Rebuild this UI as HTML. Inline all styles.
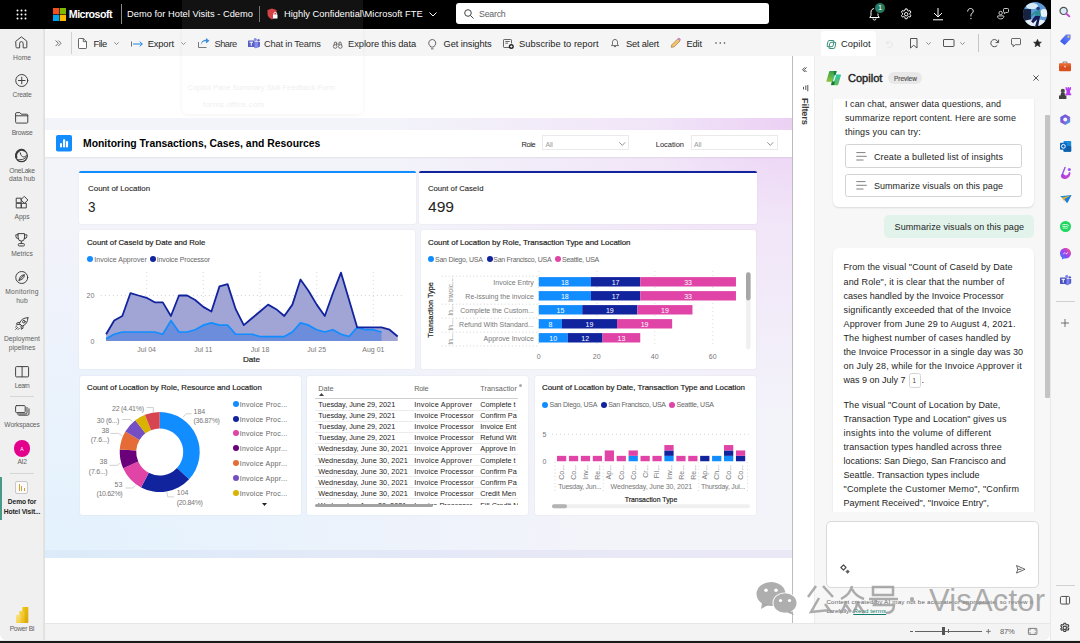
<!DOCTYPE html>
<html><head><meta charset="utf-8">
<style>
*{box-sizing:border-box;margin:0;padding:0}
html,body{width:1080px;height:643px;overflow:hidden;background:#fff;font-family:"Liberation Sans",sans-serif;color:#242424}
.a{position:absolute}
.t{white-space:nowrap;line-height:1}
.card{position:absolute;background:#fff;border-radius:2px;box-shadow:0 0 1.5px rgba(0,0,0,.10)}
svg{overflow:visible}

</style></head><body>
<div class="a" style="left:0;top:0;width:1050px;height:29px;background:#000"></div>
<div class="a" style="left:0;top:29px;width:44px;height:611px;background:#f0f0f0;border-bottom-left-radius:6px;box-shadow:1px 0 1px rgba(0,0,0,.06)"></div>
<div class="a" style="left:44px;top:29px;width:1006px;height:27px;background:#f5f5f5"></div>
<div class="a" style="left:44px;top:56px;width:748px;height:567px;background:#fff"></div>
<div class="a" style="left:44px;top:118px;width:748px;height:432px;background:radial-gradient(ellipse 400px 300px at 100% 0%,#ebd0f4 0%,rgba(240,220,247,.6) 35%,rgba(242,236,250,0) 100%),radial-gradient(ellipse 540px 320px at 0% 100%,#e3f2fd 0%,rgba(229,242,253,.7) 40%,rgba(243,243,250,0) 100%),#f3f3fa"></div>
<div class="a" style="left:44px;top:550px;width:748px;height:8px;background:linear-gradient(90deg,#dcebf9,#e6e8f6 60%,#ebe8f6)"></div>
<div class="a" style="left:792px;top:56px;width:23px;height:567px;background:#fff;border-left:1px solid #bdbdbd;border-right:1px solid #ececec"></div>
<div class="a" style="left:815px;top:56px;width:235px;height:567px;background:#f7f7f7"></div>
<div class="a" style="left:44px;top:623px;width:1006px;height:17px;background:#f3f3f3;border-top:1px solid #e6e6e6;border-radius:0 0 6px 0"></div>
<div class="a" style="left:0;top:640px;width:1080px;height:1px;background:#e8e8e8"></div>
<div class="a" style="left:0;top:641px;width:1080px;height:2px;background:#1a1a1a"></div>
<div class="a" style="left:1050px;top:0;width:30px;height:640px;background:#f7f7f7;border-left:1px solid #e8e8e8"></div>
<div class="a" style="left:43px;top:29px;width:2px;height:611px;background:linear-gradient(90deg,#e6e6e6,#dedede);z-index:5"></div>
<svg class="a" style="left:16px;top:9px" width="11" height="11" viewBox="0 0 11 11" fill="#fff"><circle cx="1.5" cy="1.5" r="1"/><circle cx="5.5" cy="1.5" r="1"/><circle cx="9.5" cy="1.5" r="1"/><circle cx="1.5" cy="5.5" r="1"/><circle cx="5.5" cy="5.5" r="1"/><circle cx="9.5" cy="5.5" r="1"/><circle cx="1.5" cy="9.5" r="1"/><circle cx="5.5" cy="9.5" r="1"/><circle cx="9.5" cy="9.5" r="1"/></svg>
<svg class="a" style="left:53px;top:7.5px" width="13" height="13" viewBox="0 0 13 13"><rect x="0" y="0" width="6.2" height="6.2" fill="#f25022"/><rect x="6.8" y="0" width="6.2" height="6.2" fill="#7fba00"/><rect x="0" y="6.8" width="6.2" height="6.2" fill="#00a4ef"/><rect x="6.8" y="6.8" width="6.2" height="6.2" fill="#ffb900"/></svg>
<div class="a t" style="left:68.8px;top:9.24px;font-size:10.7px;color:#fff;font-weight:700;letter-spacing:-0.549px;">Microsoft</div>
<div class="a" style="left:121px;top:4px;width:1px;height:20px;background:#8a8a8a"></div>
<div class="a t" style="left:127px;top:10.03px;font-size:9.3px;color:#fff;letter-spacing:0.022px;">Demo for Hotel Visits - Cdemo</div>
<div class="a" style="left:182px;top:0;width:181px;height:114px;background:rgba(255,255,255,.07);border-radius:0 0 6px 6px;box-shadow:0 1px 4px rgba(0,0,0,.05);z-index:50"></div>
<div class="a" style="left:259px;top:6px;width:1px;height:16px;background:#6a6a6a"></div>
<svg class="a" style="left:267px;top:8px" width="11" height="12" viewBox="0 0 11 12"><path d="M5 0.5 L9.5 2 V6 C9.5 8.5 7.5 10.5 5 11.5 C2.5 10.5 0.5 8.5 0.5 6 V2 Z" fill="#d13438"/><rect x="6" y="6.5" width="4.5" height="4" rx="0.5" fill="#fff"/><path d="M6.8 6.8 V5.8 a1.45 1.45 0 0 1 2.9 0 V6.8" stroke="#fff" stroke-width="0.9" fill="none"/></svg>
<div class="a t" style="left:284px;top:10.03px;font-size:9.3px;color:#fff;letter-spacing:0.023px;">Highly Confidential\Microsoft FTE</div>
<svg class="a" style="left:429px;top:12px" width="8" height="5" viewBox="0 0 8 5"><path d="M0.5 0.5 L4 4 L7.5 0.5" stroke="#fff" stroke-width="1" fill="none"/></svg>
<div class="a" style="left:456px;top:3px;width:313px;height:21px;background:#fff;border-radius:3px"></div>
<svg class="a" style="left:464px;top:9px" width="10" height="10" viewBox="0 0 10 10"><circle cx="4" cy="4" r="3.3" stroke="#424242" stroke-width="1" fill="none"/><path d="M6.4 6.4 L9.5 9.5" stroke="#424242" stroke-width="1"/></svg>
<div class="a t" style="left:479px;top:10.45px;font-size:8.8px;color:#616161;letter-spacing:-0.235px;">Search</div>
<svg class="a" style="left:868px;top:7px" width="13" height="14" viewBox="0 0 13 14"><path d="M6.5 1.5 C4.3 1.5 3 3.2 3 5.2 V8.5 L1.8 10.5 H11.2 L10 8.5 V5.2 C10 3.2 8.7 1.5 6.5 1.5 Z" stroke="#fff" stroke-width="1" fill="none"/><path d="M5 11.5 a1.5 1.5 0 0 0 3 0" stroke="#fff" stroke-width="1" fill="none"/></svg>
<div class="a" style="left:874px;top:1.6px;width:12.4px;height:12.4px;border-radius:50%;background:#257a60;color:#fff;font-size:7.5px;text-align:center;line-height:10px;border:1px solid #000">1</div>
<svg class="a" style="left:900px;top:7.6px" width="12.4" height="12.4" viewBox="0 0 24 24"><circle cx="12" cy="12" r="3.3" stroke="#fff" stroke-width="1.9" fill="none"/><path d="M10.2 1.8h3.6l.7 2.9 2.1 1.2 2.8-.9 1.8 3.1-2.2 2v2.4l2.2 2-1.8 3.1-2.8-.9-2.1 1.2-.7 2.9h-3.6l-.7-2.9-2.1-1.2-2.8.9-1.8-3.1 2.2-2v-2.4l-2.2-2 1.8-3.1 2.8.9 2.1-1.2z" stroke="#fff" stroke-width="1.9" fill="none" stroke-linejoin="round"/></svg>
<svg class="a" style="left:932px;top:7px" width="12" height="14" viewBox="0 0 12 14"><path d="M6 1 V10 M2 6 L6 10 L10 6 M1 12.8 H11" stroke="#fff" stroke-width="1" fill="none"/></svg>
<svg class="a" style="left:966.5px;top:8px" width="7" height="12" viewBox="0 0 7 12"><path d="M0.7 3.2 C0.7 1.6 1.9 0.5 3.5 0.5 C5.1 0.5 6.3 1.6 6.3 3.1 C6.3 4.9 3.9 5.3 3.9 7.4 V8" stroke="#fff" stroke-width="0.95" fill="none" stroke-linecap="round"/><circle cx="3.9" cy="10.6" r=".7" fill="#fff"/></svg>
<svg class="a" style="left:996.5px;top:7.5px" width="12" height="11.5" viewBox="0 0 12 11.5"><circle cx="3.6" cy="5" r="1.7" stroke="#e0e0e0" stroke-width="0.9" fill="none"/><path d="M0.9 7.9 H6.5 a.4 .4 0 0 1 .4 .4 C6.9 10 5.5 10.9 3.7 10.9 C1.9 10.9 0.5 10 0.5 8.3 a.4 .4 0 0 1 .4 -.4 Z" stroke="#e0e0e0" stroke-width="0.9" fill="none"/><path d="M7.2 0.5 H10.6 a.9 .9 0 0 1 .9 .9 V3.6 a.9 .9 0 0 1 -.9 .9 H8.8 L7.4 5.8 V4.5 a.9 .9 0 0 1 -.9 -.9 V1.4 a.9 .9 0 0 1 .7 -.9 Z" stroke="#e0e0e0" stroke-width="0.9" fill="none"/></svg>
<svg class="a" style="left:1022.5px;top:1.8px" width="24.2" height="24.2" viewBox="0 0 24 24"><defs><clipPath id="avc"><circle cx="12" cy="12" r="12"/></clipPath></defs><g clip-path="url(#avc)"><rect width="24" height="24" fill="#5c9ad8"/><ellipse cx="9" cy="4" rx="6" ry="3" fill="#d6e8f6"/><ellipse cx="21" cy="11" rx="4" ry="4" fill="#e6f0f8"/><rect x="0" y="7" width="8" height="12" fill="#16223f"/><ellipse cx="12" cy="21" rx="12" ry="4" fill="#e4eef6"/><path d="M12 9 L17 8 L18 14 L12 14 Z" fill="#2d8d96"/><circle cx="15" cy="6.5" r="1.8" fill="#1d3f7a"/><path d="M12 14 L17 14 L15 24 L12 24 L14 17 L10 21 L8 19 Z" fill="#141a55"/><path d="M12 10 L8 14" stroke="#2d8d96" stroke-width="1.5"/></g></svg>
<div class="a" style="left:44px;top:29px;width:1006px;height:1px;background:#fafafa"></div>
<svg class="a" style="left:54.5px;top:40px" width="7" height="7" viewBox="0 0 7 7"><path d="M0.6 0.5 L3.3 3.3 L0.6 6.1 M3.3 0.5 L6 3.3 L3.3 6.1" stroke="#616161" stroke-width="0.9" fill="none"/></svg>
<div class="a" style="left:71px;top:32px;width:1px;height:22px;background:#d1d1d1"></div>
<svg class="a" style="left:78px;top:37.8px" width="9" height="11" viewBox="0 0 9 11"><path d="M0.5 1.2 a0.7 0.7 0 0 1 .7 -.7 H5.3 L8.5 3.7 V9.8 a0.7 0.7 0 0 1 -.7 .7 H1.2 a0.7 0.7 0 0 1 -.7 -.7 Z M5.3 0.5 V3.7 H8.5" stroke="#424242" stroke-width="0.8" fill="#fff" stroke-linejoin="round"/></svg>
<div class="a t" style="left:93.6px;top:39.53px;font-size:9.3px;color:#242424;letter-spacing:-0.495px;">File</div>
<svg class="a" style="left:114px;top:41.9px" width="5" height="3" viewBox="0 0 5 3"><path d="M0.3 0.3 L2.5 2.5 L4.7 0.3" stroke="#616161" stroke-width="0.7" fill="none"/></svg>
<svg class="a" style="left:130.8px;top:40.5px" width="12" height="6" viewBox="0 0 12 6"><path d="M0.5 0.5 V5.5" stroke="#616161" stroke-width="0.9"/><path d="M2 3 H11.3 M8.7 0.6 L11.3 3 L8.7 5.4" stroke="#1f87e0" stroke-width="1" fill="none"/></svg>
<div class="a t" style="left:147.7px;top:39.53px;font-size:9.3px;color:#242424;letter-spacing:-0.115px;">Export</div>
<svg class="a" style="left:181px;top:41.9px" width="5" height="3" viewBox="0 0 5 3"><path d="M0.3 0.3 L2.5 2.5 L4.7 0.3" stroke="#616161" stroke-width="0.7" fill="none"/></svg>
<svg class="a" style="left:197.6px;top:37.8px" width="12" height="10" viewBox="0 0 12 10"><path d="M0.5 4 V9.5 H8.5" stroke="#616161" stroke-width="0.9" fill="none"/><path d="M3 8 C3 4.5 5.5 3.2 8 3.2 V5.6 L11.5 2.8 L8 0 V1.8 C5 1.8 2.5 4 3 8 Z" fill="#2f86d8"/></svg>
<div class="a t" style="left:214.5px;top:39.53px;font-size:9.3px;color:#242424;letter-spacing:-0.528px;">Share</div>
<svg class="a" style="left:248px;top:37.8px" width="12" height="10" viewBox="0 0 12 10"><circle cx="7.3" cy="1.6" r="1.5" fill="#7b83eb"/><circle cx="10.5" cy="2.2" r="1.2" fill="#5059c9"/><path d="M8.5 4 H12 V7.5 a2 2 0 0 1 -3.5 1.3 Z" fill="#5059c9"/><path d="M4 3.8 H10 V8 a2.2 2.2 0 0 1 -4.4 0 Z" fill="#7b83eb"/><rect x="0" y="2.5" width="6.5" height="6.5" rx=".6" fill="#4b53bc"/><path d="M1.5 4.2 H5 M3.25 4.2 V7.8" stroke="#fff" stroke-width="1"/></svg>
<div class="a t" style="left:264px;top:39.53px;font-size:9.3px;color:#242424;letter-spacing:-0.189px;">Chat in Teams</div>
<svg class="a" style="left:332.8px;top:40.8px" width="9.5" height="8" viewBox="0 0 10 8"><circle cx="2.3" cy="5.6" r="1.9" stroke="#424242" stroke-width="0.8" fill="none"/><circle cx="7.7" cy="5.6" r="1.9" stroke="#424242" stroke-width="0.8" fill="none"/><path d="M0.8 4.5 L1.8 1 H3.6 V4 M6.4 4 V1 H8.2 L9.2 4.5 M3.6 3 H6.4" stroke="#424242" stroke-width="0.8" fill="none"/></svg>
<div class="a t" style="left:348.1px;top:39.53px;font-size:9.3px;color:#242424;letter-spacing:-0.079px;">Explore this data</div>
<svg class="a" style="left:428px;top:38.5px" width="8.5" height="10.5" viewBox="0 0 8.5 10.5"><path d="M4.25 0.5 a3.6 3.6 0 0 0 -2.2 6.4 L2.8 8 H5.7 L6.45 6.9 a3.6 3.6 0 0 0 -2.2 -6.4 Z M3 9.8 H5.5" stroke="#424242" stroke-width="0.8" fill="none"/></svg>
<div class="a t" style="left:443.5px;top:39.53px;font-size:9.3px;color:#242424;letter-spacing:-0.081px;">Get insights</div>
<svg class="a" style="left:503px;top:38.5px" width="11" height="10" viewBox="0 0 11 10"><path d="M6 8.5 H1.2 a.7 .7 0 0 1 -.7 -.7 V1.2 a.7 .7 0 0 1 .7 -.7 H7.8 a.7 .7 0 0 1 .7 .7 V4.5 M2.3 2.5 H6.7 M2.3 4.2 H5" stroke="#424242" stroke-width="0.8" fill="none"/><circle cx="8.3" cy="7.5" r="2.5" fill="#242424"/><path d="M8.3 6.2 V8.8 M7 7.5 H9.6" stroke="#fff" stroke-width="0.8"/></svg>
<div class="a t" style="left:519px;top:39.53px;font-size:9.3px;color:#242424;letter-spacing:0.052px;">Subscribe to report</div>
<svg class="a" style="left:610.7px;top:39.3px" width="8" height="8.5" viewBox="0 0 8 8.5"><path d="M4 0.5 C2.3 0.5 1.5 1.8 1.5 3.2 V5.2 L0.5 6.6 H7.5 L6.5 5.2 V3.2 C6.5 1.8 5.7 0.5 4 0.5 Z M3 7.6 H5" stroke="#424242" stroke-width="0.8" fill="none" stroke-linejoin="round"/></svg>
<div class="a t" style="left:626px;top:39.53px;font-size:9.3px;color:#242424;letter-spacing:-0.178px;">Set alert</div>
<svg class="a" style="left:670px;top:38px" width="11" height="10.5" viewBox="0 0 11 10.5"><path d="M1.2 9.3 L1.8 6.8 L7.8 0.8 L10 3 L4 9 Z" fill="#f6c26a" stroke="#8a6a3a" stroke-width="0.6"/><path d="M7.8 0.8 L10 3 L10.5 2.4 a1 1 0 0 0 0 -1.4 L9.6 0.1 a1 1 0 0 0 -1.4 0 Z" fill="#c882d6"/></svg>
<div class="a t" style="left:686.5px;top:39.53px;font-size:9.3px;color:#242424;letter-spacing:-0.177px;">Edit</div>
<svg class="a" style="left:714.5px;top:42.3px" width="10.5" height="2" viewBox="0 0 10.5 2" fill="#424242"><circle cx="1" cy="1" r=".8"/><circle cx="5.25" cy="1" r=".8"/><circle cx="9.5" cy="1" r=".8"/></svg>
<div class="a" style="left:821px;top:31px;width:55px;height:25px;background:#fff;border-radius:4px 4px 0 0"></div>
<svg class="a" style="left:827px;top:40px" width="10" height="9" viewBox="0 0 10 9"><g transform="skewX(-12)" stroke="#3b8f7b" stroke-width="1" fill="none"><rect x="1.3" y="0.5" width="6" height="6.3" rx="1.6"/><rect x="3.5" y="2.2" width="6" height="6.3" rx="1.6"/></g></svg>
<div class="a t" style="left:840.9px;top:39.63px;font-size:9.3px;color:#242424;letter-spacing:0.124px;">Copilot</div>
<svg class="a" style="left:885.4px;top:39.5px" width="8" height="8" viewBox="0 0 8 8"><path d="M1.5 1 V3.5 H4 M1.7 3.3 a3 3 0 1 1 .6 3.5" stroke="#e2e2e2" stroke-width="0.8" fill="none"/></svg>
<svg class="a" style="left:909.8px;top:37.6px" width="7.5" height="10.5" viewBox="0 0 7.5 10.5"><path d="M0.5 0.5 H7 V10 L3.75 7.3 L0.5 10 Z" stroke="#424242" stroke-width="0.9" fill="none" stroke-linejoin="round"/></svg>
<svg class="a" style="left:925.8px;top:42px" width="5" height="3" viewBox="0 0 5 3"><path d="M0.3 0.3 L2.5 2.5 L4.7 0.3" stroke="#616161" stroke-width="0.7" fill="none"/></svg>
<svg class="a" style="left:942.7px;top:39px" width="11.5" height="8" viewBox="0 0 11.5 8"><rect x=".5" y=".5" width="10.5" height="7" rx=".5" stroke="#424242" stroke-width="0.9" fill="none"/></svg>
<svg class="a" style="left:960.2px;top:42px" width="5" height="3" viewBox="0 0 5 3"><path d="M0.3 0.3 L2.5 2.5 L4.7 0.3" stroke="#616161" stroke-width="0.7" fill="none"/></svg>
<div class="a" style="left:977.5px;top:34.3px;width:1.4px;height:18px;background:#c6c6c6"></div>
<svg class="a" style="left:990px;top:38.7px" width="9" height="8.5" viewBox="0 0 9 8.5"><path d="M7.9 3.2 A3.6 3.6 0 1 0 7.3 6.3" stroke="#424242" stroke-width="0.9" fill="none"/><path d="M8.6 0.6 V3.6 H5.6" stroke="#424242" stroke-width="0.9" fill="none"/></svg>
<svg class="a" style="left:1011px;top:38.4px" width="10" height="9.5" viewBox="0 0 10 9.5"><path d="M1.2 0.5 H8.8 a.7 .7 0 0 1 .7 .7 V6 a.7 .7 0 0 1 -.7 .7 H4.2 L2.2 8.8 V6.7 H1.2 a.7 .7 0 0 1 -.7 -.7 V1.2 a.7 .7 0 0 1 .7 -.7 Z" stroke="#424242" stroke-width="0.8" fill="none" stroke-linejoin="round"/></svg>
<svg class="a" style="left:1032.8px;top:39px" width="9" height="8.5" viewBox="0 0 24 23"><path d="M12 1 L15.1 8 L22.5 8.6 L16.8 13.5 L18.6 21 L12 17 L5.4 21 L7.2 13.5 L1.5 8.6 L8.9 8 Z" fill="#242424" stroke="#242424" stroke-width="1.5" stroke-linejoin="round"/></svg>
<svg class="a" style="left:15.3px;top:36.3px" width="12.8" height="12.4" viewBox="0 0 13 12.5"><path d="M1 5.2 L6.5 0.8 L12 5.2 V11.2 a.8 .8 0 0 1 -.8 .8 H8.3 V7.5 a1.8 1.8 0 0 0 -3.6 0 V12 H1.8 a.8 .8 0 0 1 -.8 -.8 Z" stroke="#424242" stroke-width="1" fill="none" stroke-linejoin="round" stroke-linecap="round"/></svg>
<div class="a t" style="left:22px;top:54.83px;font-size:6.7px;color:#616161;letter-spacing:-0.015px;transform:translateX(-50%);">Home</div>
<svg class="a" style="left:15px;top:74.1px" width="13.5" height="13" viewBox="0 0 13.5 13"><circle cx="6.75" cy="6.5" r="6" stroke="#424242" stroke-width="1" fill="none" stroke-linejoin="round" stroke-linecap="round"/><path d="M6.75 3.2 V9.8 M3.45 6.5 H10.05" stroke="#424242" stroke-width="1" fill="none" stroke-linejoin="round" stroke-linecap="round"/></svg>
<div class="a t" style="left:22px;top:91.83px;font-size:6.7px;color:#616161;letter-spacing:-0.216px;transform:translateX(-50%);">Create</div>
<svg class="a" style="left:15px;top:112px" width="13.4" height="11.7" viewBox="0 0 13.4 11.7"><path d="M0.6 1.6 a1 1 0 0 1 1 -1 H4.8 L6.2 2.2 H11.8 a1 1 0 0 1 1 1 V10.1 a1 1 0 0 1 -1 1 H1.6 a1 1 0 0 1 -1 -1 Z M0.6 3.8 H12.8" stroke="#424242" stroke-width="1" fill="none" stroke-linejoin="round" stroke-linecap="round"/></svg>
<div class="a t" style="left:22px;top:129.73px;font-size:6.7px;color:#616161;letter-spacing:-0.263px;transform:translateX(-50%);">Browse</div>
<svg class="a" style="left:15px;top:148.8px" width="13.2" height="13.4" viewBox="0 0 13.2 13.4"><circle cx="6.5" cy="6.8" r="5.9" stroke="#3a3a3a" stroke-width="1.2" fill="none"/><path d="M1.6 9.2 A5.9 5.9 0 0 1 4.2 1.5 C5.5 0.3 8 0.4 9.8 1.9" stroke="#3a3a3a" stroke-width="2" fill="none"/><path d="M5.2 3.4 C5.6 6 6.8 7.8 8.6 7.9 C10 7.9 11 7.1 11.8 6" stroke="#3a3a3a" stroke-width="1" fill="none"/><path d="M2.2 10.4 C5.5 11.3 9.5 10.5 11.9 7.5" stroke="#3a3a3a" stroke-width="1" fill="none"/></svg>
<div class="a t" style="left:22px;top:167.93px;font-size:6.7px;color:#616161;letter-spacing:-0.259px;transform:translateX(-50%);">OneLake</div>
<div class="a t" style="left:22px;top:176.33px;font-size:6.7px;color:#616161;letter-spacing:0.008px;transform:translateX(-50%);">data hub</div>
<svg class="a" style="left:15.9px;top:195.5px" width="13" height="12.5" viewBox="0 0 13 12.5"><rect x="0.6" y="2.2" width="4.6" height="4.6" stroke="#424242" stroke-width="1" fill="none" stroke-linejoin="round" stroke-linecap="round"/><rect x="0.6" y="7.3" width="4.6" height="4.6" stroke="#424242" stroke-width="1" fill="none" stroke-linejoin="round" stroke-linecap="round"/><rect x="5.7" y="7.3" width="4.6" height="4.6" stroke="#424242" stroke-width="1" fill="none" stroke-linejoin="round" stroke-linecap="round"/><path d="M8.5 0.6 L11.9 4 L8.5 7.4 L5.1 4 Z" stroke="#424242" stroke-width="1" fill="none" stroke-linejoin="round" stroke-linecap="round"/></svg>
<div class="a t" style="left:22px;top:213.63px;font-size:6.7px;color:#616161;letter-spacing:-0.117px;transform:translateX(-50%);">Apps</div>
<svg class="a" style="left:15.3px;top:232.8px" width="12.7" height="13.7" viewBox="0 0 12.7 13.7"><path d="M3.2 0.6 H9.5 V5 a3.15 3.15 0 0 1 -6.3 0 Z M3.2 1.8 H0.8 V3.2 a2.4 2.4 0 0 0 2.6 2.4 M9.5 1.8 H11.9 V3.2 a2.4 2.4 0 0 1 -2.6 2.4 M6.35 8.2 V10.5" stroke="#424242" stroke-width="1" fill="none" stroke-linejoin="round" stroke-linecap="round"/><rect x="3.3" y="10.6" width="6.1" height="2.4" rx=".9" stroke="#424242" stroke-width="1" fill="none"/></svg>
<div class="a t" style="left:22px;top:251.13px;font-size:6.7px;color:#616161;letter-spacing:-0.010px;transform:translateX(-50%);">Metrics</div>
<svg class="a" style="left:14.9px;top:271.3px" width="13.5" height="13" viewBox="0 0 13.5 13"><circle cx="6.75" cy="6.5" r="6" stroke="#424242" stroke-width="1" fill="none" stroke-linejoin="round" stroke-linecap="round"/><path d="M4.2 9.2 C4 6.5 6 4 9.3 3.8 C9.5 6.5 7.5 9 4.2 9.2 Z M4.2 9.2 L9.3 3.8" stroke="#424242" stroke-width="1" fill="none" stroke-linejoin="round" stroke-linecap="round"/></svg>
<div class="a t" style="left:22px;top:289.23px;font-size:6.7px;color:#616161;letter-spacing:0.218px;transform:translateX(-50%);">Monitoring</div>
<div class="a t" style="left:22px;top:297.83px;font-size:6.7px;color:#616161;letter-spacing:0.114px;transform:translateX(-50%);">hub</div>
<svg class="a" style="left:15.3px;top:317.1px" width="13.6" height="13.1" viewBox="0 0 13.6 13.1"><path d="M12.9 0.7 C9 0.7 5.6 2.6 4.4 6.4 L7.2 9.2 C11 8 12.9 4.6 12.9 0.7 Z" stroke="#424242" stroke-width="1" fill="none" stroke-linejoin="round" stroke-linecap="round"/><circle cx="8.9" cy="4.7" r="1.3" stroke="#424242" stroke-width="1" fill="none" stroke-linejoin="round" stroke-linecap="round"/><path d="M4.7 5.6 L2.4 5.6 L1.3 7.2 L4.6 7.6 M8 8.9 L8 11.2 L6.4 12.3 L6 9" stroke="#424242" stroke-width="1" fill="none" stroke-linejoin="round" stroke-linecap="round"/><path d="M0.7 12.4 L2.7 10.4 M0.6 10 L1.9 8.8 M3.1 12.5 L4.3 11.3" stroke="#424242" stroke-width="1" fill="none" stroke-linejoin="round" stroke-linecap="round"/></svg>
<div class="a t" style="left:22px;top:335.53px;font-size:6.7px;color:#616161;letter-spacing:0.035px;transform:translateX(-50%);">Deployment</div>
<div class="a t" style="left:22px;top:344.93px;font-size:6.7px;color:#616161;letter-spacing:0.037px;transform:translateX(-50%);">pipelines</div>
<svg class="a" style="left:14.5px;top:365.9px" width="14.2" height="11.5" viewBox="0 0 14.2 11.5"><path d="M0.6 1.3 a.7 .7 0 0 1 .7 -.7 H7.1 V10.9 H1.3 a.7 .7 0 0 1 -.7 -.7 Z M7.1 0.6 H12.9 a.7 .7 0 0 1 .7 .7 V10.2 a.7 .7 0 0 1 -.7 .7 H7.1" stroke="#424242" stroke-width="1" fill="none" stroke-linejoin="round" stroke-linecap="round"/></svg>
<div class="a t" style="left:22px;top:382.73px;font-size:6.7px;color:#616161;letter-spacing:-0.527px;transform:translateX(-50%);">Learn</div>
<div class="a" style="left:9.7px;top:395.8px;width:24px;height:1px;background:#d6d6d6"></div>
<svg class="a" style="left:14.5px;top:405px" width="14.8" height="10.8" viewBox="0 0 14.8 10.8"><rect x="0.6" y="0.6" width="9.6" height="7" rx="1" stroke="#424242" stroke-width="1" fill="none" stroke-linejoin="round" stroke-linecap="round"/><path d="M2.3 9 H11 a1 1 0 0 0 1 -1 V2.3" stroke="#424242" stroke-width="1" fill="none" stroke-linejoin="round" stroke-linecap="round"/><path d="M3.8 10.2 H12.5 a1.5 1.5 0 0 0 1.5 -1.5 V3.8" stroke="#424242" stroke-width="1" fill="none" stroke-linejoin="round" stroke-linecap="round"/></svg>
<div class="a t" style="left:22px;top:422.13px;font-size:6.7px;color:#616161;letter-spacing:-0.141px;transform:translateX(-50%);">Workspaces</div>
<div class="a" style="left:13.7px;top:440px;width:16.6px;height:16.6px;border-radius:50%;background:#e3008c"></div>
<div class="a t" style="left:22px;top:446.57px;font-size:5px;color:#fff;transform:translateX(-50%);">A</div>
<div class="a t" style="left:22px;top:459.03px;font-size:6.7px;color:#616161;letter-spacing:-0.273px;transform:translateX(-50%);">AI2</div>
<div class="a" style="left:9.8px;top:473px;width:24px;height:1px;background:#d6d6d6"></div>
<div class="a" style="left:0;top:477px;width:2px;height:43px;background:#4a9a8a"></div>
<div class="a" style="left:15.3px;top:481.1px;width:12.8px;height:13.3px;border-radius:2px;background:#fafafa;border:1px solid #c8c8c8"></div>
<div class="a" style="left:18.6px;top:483.5px;width:1.2px;height:7.5px;background:#d4a030"></div>
<div class="a" style="left:21.2px;top:485.5px;width:1.2px;height:5.5px;background:#d4a030"></div>
<div class="a" style="left:23.8px;top:487.5px;width:1.2px;height:3.5px;background:#d4a030"></div>
<div class="a t" style="left:22px;top:499.23px;font-size:6.7px;color:#242424;font-weight:700;letter-spacing:-0.137px;transform:translateX(-50%);">Demo for</div>
<div class="a t" style="left:22px;top:508.63px;font-size:6.7px;color:#242424;font-weight:700;letter-spacing:-0.127px;transform:translateX(-50%);">Hotel Visit...</div>
<svg class="a" style="left:15.7px;top:606.9px" width="12.3" height="16.1" viewBox="0 0 12.3 16.1"><defs><linearGradient id="pb1" x1="0" y1="0" x2="1" y2="1"><stop offset="0" stop-color="#f2c811"/><stop offset="1" stop-color="#d9a30e"/></linearGradient><linearGradient id="pb2" x1="0" y1="0" x2="1" y2="1"><stop offset="0" stop-color="#f7d84a"/><stop offset="1" stop-color="#e8b818"/></linearGradient><linearGradient id="pb3" x1="0" y1="0" x2="1" y2="1"><stop offset="0" stop-color="#fbe58a"/><stop offset="1" stop-color="#f0c93a"/></linearGradient></defs><rect x="6.4" y="0" width="5.9" height="16.1" rx=".6" fill="url(#pb1)"/><rect x="3.3" y="4" width="5.2" height="12.1" rx=".6" fill="url(#pb2)"/><rect x="0" y="7.8" width="5" height="8.3" rx=".6" fill="url(#pb3)"/></svg>
<div class="a t" style="left:22px;top:626.03px;font-size:6.7px;color:#616161;letter-spacing:-0.306px;transform:translateX(-50%);">Power BI</div>
<div class="a t" style="left:187.5px;top:84.15px;font-size:7.5px;color:#efefef;letter-spacing:-0.002px;z-index:51;">Copilot Pane Summary Skill Feedback Form</div>
<div class="a t" style="left:203px;top:100.50px;font-size:7.8px;color:#efefef;letter-spacing:0.263px;z-index:51;">forms.office.com</div>
<div class="a" style="left:44px;top:130px;width:748px;height:26.7px;background:#fff;box-shadow:0 1px 1.5px rgba(0,0,0,.07)"></div>
<svg class="a" style="left:56px;top:135px" width="16" height="16.5" viewBox="0 0 16 16.5"><rect width="16" height="16.5" rx="1.8" fill="#118dff"/><rect x="4" y="8" width="2" height="4.4" rx=".9" fill="#fff"/><rect x="7" y="4.3" width="2.2" height="8.1" rx=".9" fill="#fff"/><rect x="10" y="6.1" width="2.1" height="6.3" rx=".9" fill="#fff"/></svg>
<div class="a t" style="left:83px;top:138.09px;font-size:11px;color:#000;font-weight:700;transform:scaleX(0.9449);transform-origin:0 0;">Monitoring Transactions, Cases, and Resources</div>
<div class="a t" style="left:521.5px;top:141.05px;font-size:7.5px;color:#252423;letter-spacing:-0.379px;">Role</div>
<div class="a" style="left:541.6px;top:135.4px;width:87.8px;height:15.1px;border:1px solid #eaeaea;background:#fff"></div>
<div class="a t" style="left:545.5px;top:141.17px;font-size:7px;color:#9a9a9a;letter-spacing:-0.191px;">All</div>
<svg class="a" style="left:619.4px;top:141.9px" width="6.5" height="4" viewBox="0 0 6.5 4"><path d="M0.3 0.3 L3.25 3.4 L6.2 0.3" stroke="#666" stroke-width="0.7" fill="none"/></svg>
<div class="a t" style="left:655.8px;top:141.05px;font-size:7.5px;color:#252423;letter-spacing:-0.023px;">Location</div>
<div class="a" style="left:690.5px;top:135.4px;width:87.3px;height:15.1px;border:1px solid #eaeaea;background:#fff"></div>
<div class="a t" style="left:694.1px;top:141.17px;font-size:7px;color:#9a9a9a;letter-spacing:-0.191px;">All</div>
<svg class="a" style="left:767.4px;top:141.9px" width="6.5" height="4" viewBox="0 0 6.5 4"><path d="M0.3 0.3 L3.25 3.4 L6.2 0.3" stroke="#666" stroke-width="0.7" fill="none"/></svg>
<div class="card" style="left:79.1px;top:171.3px;width:337.4px;height:52.7px;border-top:2.5px solid #118dff"></div>
<div class="card" style="left:419.3px;top:171.3px;width:337.7px;height:52.7px;border-top:2.5px solid #12239e"></div>
<div class="card" style="left:79.1px;top:230px;width:336.4px;height:139px"></div>
<div class="card" style="left:420.7px;top:230px;width:335.3px;height:139px"></div>
<div class="card" style="left:79.8px;top:375.8px;width:221.5px;height:138.9px"></div>
<div class="card" style="left:307px;top:375.8px;width:221.3px;height:138.9px"></div>
<div class="card" style="left:535px;top:375.8px;width:221.3px;height:138.9px"></div>
<div class="a t" style="left:87.8px;top:184.57px;font-size:7.6px;color:#252423;transform:scaleX(1.0448);transform-origin:0 0;-webkit-text-stroke:0.1px #252423;">Count of Location</div>
<div class="a t" style="left:88px;top:199.43px;font-size:15.2px;color:#252423;transform:scaleX(0.8872);transform-origin:0 0;">3</div>
<div class="a t" style="left:427.5px;top:184.57px;font-size:7.6px;color:#252423;transform:scaleX(1.0111);transform-origin:0 0;-webkit-text-stroke:0.1px #252423;">Count of CaseId</div>
<div class="a t" style="left:427.5px;top:199.43px;font-size:15.2px;color:#252423;transform:scaleX(1.0259);transform-origin:0 0;">499</div>
<div class="a t" style="left:86.9px;top:239.04px;font-size:8.1px;color:#252423;transform:scaleX(0.9588);transform-origin:0 0;-webkit-text-stroke:0.2px #252423;">Count of CaseId by Date and Role</div>
<div class="a" style="left:87px;top:256px;width:6px;height:6px;border-radius:50%;background:#118dff"></div>
<div class="a t" style="left:94.3px;top:255.97px;font-size:7px;color:#666;letter-spacing:0.023px;">Invoice Approver</div>
<div class="a" style="left:149.6px;top:256px;width:6px;height:6px;border-radius:50%;background:#12239e"></div>
<div class="a t" style="left:156.8px;top:255.97px;font-size:7px;color:#666;letter-spacing:-0.153px;">Invoice Processor</div>
<div class="a t" style="right:985.7px;top:292.37px;font-size:7px;color:#777;">20</div>
<div class="a t" style="right:985.7px;top:338.17px;font-size:7px;color:#777;">0</div>
<svg class="a" style="left:0;top:0" width="1080" height="643"><line x1="100.8" y1="295.5" x2="402" y2="295.5" stroke="#c8c8c8" stroke-width="0.8" stroke-dasharray="1 3"/><line x1="146.60" y1="272" x2="146.60" y2="341" stroke="#d0d0d0" stroke-width="0.8" stroke-dasharray="1 3"/><line x1="203.30" y1="272" x2="203.30" y2="341" stroke="#d0d0d0" stroke-width="0.8" stroke-dasharray="1 3"/><line x1="260.00" y1="272" x2="260.00" y2="341" stroke="#d0d0d0" stroke-width="0.8" stroke-dasharray="1 3"/><line x1="316.70" y1="272" x2="316.70" y2="341" stroke="#d0d0d0" stroke-width="0.8" stroke-dasharray="1 3"/><line x1="373.40" y1="272" x2="373.40" y2="341" stroke="#d0d0d0" stroke-width="0.8" stroke-dasharray="1 3"/><polygon points="106.10,341.1 106.10,334.26 114.20,320.58 122.30,316.02 130.40,293.22 138.50,295.50 146.60,297.78 154.70,302.34 162.80,302.34 170.90,316.02 179.00,295.50 187.10,295.50 195.20,300.06 203.30,306.90 211.40,311.46 219.50,286.38 227.60,284.10 235.70,309.18 243.80,325.14 251.90,318.30 260.00,311.46 268.10,304.62 276.20,309.18 284.30,316.02 292.40,304.62 300.50,279.54 308.60,290.94 316.70,304.62 324.80,316.02 332.90,293.22 341.00,272.70 349.10,300.06 357.20,327.42 365.30,327.42 373.40,327.42 381.50,327.42 389.60,329.70 397.70,336.54 397.70,341.1" fill="#a0a5d6"/><polygon points="106.10,341.1 106.10,338.82 114.20,334.26 122.30,331.98 130.40,331.98 138.50,331.98 146.60,331.98 154.70,331.98 162.80,334.26 170.90,320.58 179.00,331.98 187.10,331.98 195.20,329.70 203.30,325.14 211.40,322.86 219.50,325.14 227.60,325.14 235.70,334.26 243.80,334.26 251.90,334.26 260.00,336.54 268.10,336.54 276.20,336.54 284.30,336.54 292.40,331.98 300.50,322.86 308.60,325.14 316.70,329.70 324.80,331.98 332.90,329.70 341.00,334.26 349.10,336.54 357.20,327.42 365.30,329.70 373.40,329.70 381.50,331.98 381.50,341.1" fill="#6b8ddb"/><polyline points="106.10,338.82 114.20,334.26 122.30,331.98 130.40,331.98 138.50,331.98 146.60,331.98 154.70,331.98 162.80,334.26 170.90,320.58 179.00,331.98 187.10,331.98 195.20,329.70 203.30,325.14 211.40,322.86 219.50,325.14 227.60,325.14 235.70,334.26 243.80,334.26 251.90,334.26 260.00,336.54 268.10,336.54 276.20,336.54 284.30,336.54 292.40,331.98 300.50,322.86 308.60,325.14 316.70,329.70 324.80,331.98 332.90,329.70 341.00,334.26 349.10,336.54 357.20,327.42 365.30,329.70 373.40,329.70 381.50,331.98" fill="none" stroke="#118dff" stroke-width="1.7" stroke-linejoin="round"/><polyline points="106.10,334.26 114.20,320.58 122.30,316.02 130.40,293.22 138.50,295.50 146.60,297.78 154.70,302.34 162.80,302.34 170.90,316.02 179.00,295.50 187.10,295.50 195.20,300.06 203.30,306.90 211.40,311.46 219.50,286.38 227.60,284.10 235.70,309.18 243.80,325.14 251.90,318.30 260.00,311.46 268.10,304.62 276.20,309.18 284.30,316.02 292.40,304.62 300.50,279.54 308.60,290.94 316.70,304.62 324.80,316.02 332.90,293.22 341.00,272.70 349.10,300.06 357.20,327.42 365.30,327.42 373.40,327.42 381.50,327.42 389.60,329.70 397.70,336.54" fill="none" stroke="#12239e" stroke-width="1.8" stroke-linejoin="round"/></svg>
<div class="a t" style="left:146.6px;top:345.77px;font-size:7px;color:#777;transform:translateX(-50%);">Jul 04</div>
<div class="a t" style="left:203.3px;top:345.77px;font-size:7px;color:#777;transform:translateX(-50%);">Jul 11</div>
<div class="a t" style="left:260.0px;top:345.77px;font-size:7px;color:#777;transform:translateX(-50%);">Jul 18</div>
<div class="a t" style="left:316.7px;top:345.77px;font-size:7px;color:#777;transform:translateX(-50%);">Jul 25</div>
<div class="a t" style="left:373.4px;top:345.77px;font-size:7px;color:#777;transform:translateX(-50%);">Aug 01</div>
<div class="a t" style="left:251.5px;top:355.64px;font-size:8.1px;color:#252423;transform:translateX(-50%);-webkit-text-stroke:0.2px #252423;">Date</div>
<div class="a t" style="left:428px;top:239.04px;font-size:8.1px;color:#252423;transform:scaleX(0.9748);transform-origin:0 0;-webkit-text-stroke:0.2px #252423;">Count of Location by Role, Transaction Type and Location</div>
<div class="a" style="left:428.2px;top:256px;width:6px;height:6px;border-radius:50%;background:#118dff"></div>
<div class="a t" style="left:435.0px;top:255.97px;font-size:7px;color:#666;letter-spacing:-0.230px;">San Diego, USA</div>
<div class="a" style="left:486.5px;top:256px;width:6px;height:6px;border-radius:50%;background:#12239e"></div>
<div class="a t" style="left:493.3px;top:255.97px;font-size:7px;color:#666;letter-spacing:-0.278px;">San Francisco, USA</div>
<div class="a" style="left:555.2px;top:256px;width:6px;height:6px;border-radius:50%;background:#e044a7"></div>
<div class="a t" style="left:562.0px;top:255.97px;font-size:7px;color:#666;letter-spacing:-0.253px;">Seattle, USA</div>
<svg class="a" style="left:0;top:0" width="1080" height="643"><line x1="441.8" y1="276.2" x2="539" y2="276.2" stroke="#c8c8c8" stroke-width="0.8" stroke-dasharray="1 2.5"/><line x1="441.8" y1="304.2" x2="539" y2="304.2" stroke="#c8c8c8" stroke-width="0.8" stroke-dasharray="1 2.5"/><line x1="441.8" y1="318.2" x2="539" y2="318.2" stroke="#c8c8c8" stroke-width="0.8" stroke-dasharray="1 2.5"/><line x1="441.8" y1="332.2" x2="539" y2="332.2" stroke="#c8c8c8" stroke-width="0.8" stroke-dasharray="1 2.5"/><line x1="441.8" y1="345.9" x2="539" y2="345.9" stroke="#c8c8c8" stroke-width="0.8" stroke-dasharray="1 2.5"/><line x1="452.7" y1="276" x2="452.7" y2="346" stroke="#d6d6d6" stroke-width="0.8" stroke-dasharray="1 2.5"/><line x1="538.75" y1="271" x2="538.75" y2="347" stroke="#d6d6d6" stroke-width="0.8" stroke-dasharray="1 3"/><line x1="596.75" y1="271" x2="596.75" y2="347" stroke="#d6d6d6" stroke-width="0.8" stroke-dasharray="1 3"/><line x1="654.75" y1="271" x2="654.75" y2="347" stroke="#d6d6d6" stroke-width="0.8" stroke-dasharray="1 3"/><line x1="712.75" y1="271" x2="712.75" y2="347" stroke="#d6d6d6" stroke-width="0.8" stroke-dasharray="1 3"/><rect x="538.75" y="277.1" width="52.20" height="9.4" fill="#118dff"/><rect x="590.95" y="277.1" width="49.30" height="9.4" fill="#12239e"/><rect x="640.25" y="277.1" width="95.70" height="9.4" fill="#e044a7"/><rect x="538.75" y="291.1" width="52.20" height="9.4" fill="#118dff"/><rect x="590.95" y="291.1" width="49.30" height="9.4" fill="#12239e"/><rect x="640.25" y="291.1" width="95.70" height="9.4" fill="#e044a7"/><rect x="538.75" y="305.1" width="43.50" height="9.4" fill="#118dff"/><rect x="582.25" y="305.1" width="55.10" height="9.4" fill="#12239e"/><rect x="637.35" y="305.1" width="55.10" height="9.4" fill="#e044a7"/><rect x="538.75" y="319.1" width="23.20" height="9.4" fill="#118dff"/><rect x="561.95" y="319.1" width="55.10" height="9.4" fill="#12239e"/><rect x="617.05" y="319.1" width="55.10" height="9.4" fill="#e044a7"/><rect x="538.75" y="333.1" width="29.00" height="9.4" fill="#118dff"/><rect x="567.75" y="333.1" width="34.80" height="9.4" fill="#12239e"/><rect x="602.55" y="333.1" width="37.70" height="9.4" fill="#e044a7"/><rect x="746" y="272.3" width="4.6" height="77.1" rx="2.3" fill="#f0f0f0"/><rect x="746" y="272.3" width="4.6" height="28.1" rx="2.3" fill="#a6a6a6"/></svg>
<div class="a t" style="left:564.85px;top:279.07px;font-size:7px;color:#fff;transform:translateX(-50%);">18</div>
<div class="a t" style="left:615.6px;top:279.07px;font-size:7px;color:#fff;transform:translateX(-50%);">17</div>
<div class="a t" style="left:688.1px;top:279.07px;font-size:7px;color:#fff;transform:translateX(-50%);">33</div>
<div class="a t" style="left:564.85px;top:293.07px;font-size:7px;color:#fff;transform:translateX(-50%);">18</div>
<div class="a t" style="left:615.6px;top:293.07px;font-size:7px;color:#fff;transform:translateX(-50%);">17</div>
<div class="a t" style="left:688.1px;top:293.07px;font-size:7px;color:#fff;transform:translateX(-50%);">33</div>
<div class="a t" style="left:560.5px;top:307.07px;font-size:7px;color:#fff;transform:translateX(-50%);">15</div>
<div class="a t" style="left:609.8px;top:307.07px;font-size:7px;color:#fff;transform:translateX(-50%);">19</div>
<div class="a t" style="left:664.9px;top:307.07px;font-size:7px;color:#fff;transform:translateX(-50%);">19</div>
<div class="a t" style="left:550.35px;top:321.07px;font-size:7px;color:#fff;transform:translateX(-50%);">8</div>
<div class="a t" style="left:589.5px;top:321.07px;font-size:7px;color:#fff;transform:translateX(-50%);">19</div>
<div class="a t" style="left:644.6px;top:321.07px;font-size:7px;color:#fff;transform:translateX(-50%);">19</div>
<div class="a t" style="left:553.25px;top:335.07px;font-size:7px;color:#fff;transform:translateX(-50%);">10</div>
<div class="a t" style="left:585.15px;top:335.07px;font-size:7px;color:#fff;transform:translateX(-50%);">12</div>
<div class="a t" style="left:621.4px;top:335.07px;font-size:7px;color:#fff;transform:translateX(-50%);">13</div>
<div class="a t" style="right:546.2px;top:278.97px;font-size:7px;color:#777;">Invoice Entry</div>
<div class="a t" style="right:546.2px;top:292.97px;font-size:7px;color:#777;">Re-issuing the invoice</div>
<div class="a t" style="right:546.2px;top:306.97px;font-size:7px;color:#777;">Complete the Custom...</div>
<div class="a t" style="right:546.2px;top:320.97px;font-size:7px;color:#777;">Refund With Standard...</div>
<div class="a t" style="right:546.2px;top:334.97px;font-size:7px;color:#777;">Approve Invoice</div>
<div class="a t" style="left:449.9px;top:289.9px;font-size:7px;color:#888;font-weight:400;transform:translate(-50%,-50%) rotate(-90deg);transform-origin:50% 50%;position:absolute;width:0;height:0"><span style="position:absolute;left:0;top:0;transform:translate(-50%,-50%)">Invoic...</span></div>
<div class="a t" style="left:449.9px;top:310.1px;font-size:7px;color:#888;font-weight:400;transform:translate(-50%,-50%) rotate(-90deg);transform-origin:50% 50%;position:absolute;width:0;height:0"><span style="position:absolute;left:0;top:0;transform:translate(-50%,-50%)">In...</span></div>
<div class="a t" style="left:449.9px;top:324.9px;font-size:7px;color:#888;font-weight:400;transform:translate(-50%,-50%) rotate(-90deg);transform-origin:50% 50%;position:absolute;width:0;height:0"><span style="position:absolute;left:0;top:0;transform:translate(-50%,-50%)">In...</span></div>
<div class="a t" style="left:449.9px;top:338.9px;font-size:7px;color:#888;font-weight:400;transform:translate(-50%,-50%) rotate(-90deg);transform-origin:50% 50%;position:absolute;width:0;height:0"><span style="position:absolute;left:0;top:0;transform:translate(-50%,-50%)">In...</span></div>
<div class="a" style="left:430.9px;top:310.3px;width:0;height:0"><span class="t" style="position:absolute;left:0;top:0;font-size:8.1px;color:#252423;-webkit-text-stroke:0.2px #252423;transform:translate(-50%,-50%) rotate(-90deg) scaleX(0.9)">Transaction Type</span></div>
<div class="a t" style="left:538.75px;top:353.07px;font-size:7px;color:#777;transform:translateX(-50%);">0</div>
<div class="a t" style="left:596.75px;top:353.07px;font-size:7px;color:#777;transform:translateX(-50%);">20</div>
<div class="a t" style="left:654.75px;top:353.07px;font-size:7px;color:#777;transform:translateX(-50%);">40</div>
<div class="a t" style="left:712.75px;top:353.07px;font-size:7px;color:#777;transform:translateX(-50%);">60</div>
<div class="a t" style="left:86.8px;top:384.14px;font-size:8.1px;color:#252423;transform:scaleX(0.9663);transform-origin:0 0;-webkit-text-stroke:0.2px #252423;">Count of Location by Role, Resource and Location</div>
<svg class="a" style="left:0;top:0" width="1080" height="643"><path d="M159.70 412.00 A40 40 0 0 1 189.08 479.15 L176.96 467.95 A23.5 23.5 0 0 0 159.70 428.50 Z" fill="#118dff"/><path d="M189.08 479.15 A40 40 0 0 1 141.06 487.39 L148.75 472.79 A23.5 23.5 0 0 0 176.96 467.95 Z" fill="#12239e"/><path d="M141.06 487.39 A40 40 0 0 1 123.15 468.26 L138.23 461.55 A23.5 23.5 0 0 0 148.75 472.79 Z" fill="#e044a7"/><path d="M123.15 468.26 A40 40 0 0 1 119.77 449.61 L136.24 450.60 A23.5 23.5 0 0 0 138.23 461.55 Z" fill="#6b007b"/><path d="M119.77 449.61 A40 40 0 0 1 125.36 431.49 L139.52 439.95 A23.5 23.5 0 0 0 136.24 450.60 Z" fill="#e66c37"/><path d="M125.36 431.49 A40 40 0 0 1 135.34 420.27 L145.39 433.36 A23.5 23.5 0 0 0 139.52 439.95 Z" fill="#744ec2"/><path d="M135.34 420.27 A40 40 0 0 1 144.95 414.82 L151.03 430.16 A23.5 23.5 0 0 0 145.39 433.36 Z" fill="#d9b300"/><path d="M144.95 414.82 A40 40 0 0 1 159.70 412.00 L159.70 428.50 A23.5 23.5 0 0 0 151.03 430.16 Z" fill="#d64550"/><path d="M182.8 417.3 L186.4 413.8 H191.7" stroke="#bdbdbd" stroke-width="0.7" fill="none"/><path d="M166.7 491.5 L167.8 496.9 H173.9" stroke="#bdbdbd" stroke-width="0.7" fill="none"/><path d="M135.4 485.3 L132.7 488 H125.6" stroke="#bdbdbd" stroke-width="0.7" fill="none"/><path d="M120.2 463 L117.5 465.3 H109.5" stroke="#bdbdbd" stroke-width="0.7" fill="none"/><path d="M122 435.8 L118.4 433.4 H110.4" stroke="#bdbdbd" stroke-width="0.7" fill="none"/><path d="M132.7 421.8 L130 419.5 H122" stroke="#bdbdbd" stroke-width="0.7" fill="none"/><path d="M153.3 412 V407.5 H146.5" stroke="#bdbdbd" stroke-width="0.7" fill="none"/></svg>
<div class="a t" style="left:193.5px;top:407.77px;font-size:7px;color:#777;">184</div>
<div class="a t" style="left:193.5px;top:416.77px;font-size:7px;color:#777;letter-spacing:-0.287px;">(36.87%)</div>
<div class="a t" style="left:176.8px;top:489.37px;font-size:7px;color:#777;">104</div>
<div class="a t" style="left:176.8px;top:499.17px;font-size:7px;color:#777;letter-spacing:-0.329px;">(20.84%)</div>
<div class="a t" style="right:957.6px;top:481.17px;font-size:7px;color:#777;">53</div>
<div class="a t" style="right:957.6px;top:490.47px;font-size:7px;color:#777;letter-spacing:-0.301px;">(10.62%)</div>
<div class="a t" style="right:972.7px;top:458.37px;font-size:7px;color:#777;">38</div>
<div class="a t" style="right:972.7px;top:468.37px;font-size:7px;color:#777;letter-spacing:-0.219px;">(7.6...)</div>
<div class="a t" style="right:970.8px;top:427.07px;font-size:7px;color:#777;">38</div>
<div class="a t" style="right:970.8px;top:436.47px;font-size:7px;color:#777;letter-spacing:-0.219px;">(7.6...)</div>
<div class="a t" style="left:96.8px;top:416.67px;font-size:7px;color:#777;letter-spacing:-0.191px;">30 (6...)</div>
<div class="a t" style="left:112px;top:404.77px;font-size:7px;color:#777;letter-spacing:-0.239px;">22 (4.41%)</div>
<div class="a" style="left:233px;top:400.80px;width:6px;height:6px;border-radius:50%;background:#118dff"></div>
<div class="a t" style="left:239.7px;top:400.77px;font-size:7px;color:#666;letter-spacing:0.231px;">Invoice Proc...</div>
<div class="a" style="left:233px;top:415.63px;width:6px;height:6px;border-radius:50%;background:#12239e"></div>
<div class="a t" style="left:239.7px;top:415.60px;font-size:7px;color:#666;letter-spacing:0.231px;">Invoice Proc...</div>
<div class="a" style="left:233px;top:430.46px;width:6px;height:6px;border-radius:50%;background:#e044a7"></div>
<div class="a t" style="left:239.7px;top:430.43px;font-size:7px;color:#666;letter-spacing:0.231px;">Invoice Proc...</div>
<div class="a" style="left:233px;top:445.29px;width:6px;height:6px;border-radius:50%;background:#6b007b"></div>
<div class="a t" style="left:239.7px;top:445.26px;font-size:7px;color:#666;letter-spacing:0.258px;">Invoice Appr...</div>
<div class="a" style="left:233px;top:460.12px;width:6px;height:6px;border-radius:50%;background:#e66c37"></div>
<div class="a t" style="left:239.7px;top:460.09px;font-size:7px;color:#666;letter-spacing:0.258px;">Invoice Appr...</div>
<div class="a" style="left:233px;top:474.95px;width:6px;height:6px;border-radius:50%;background:#744ec2"></div>
<div class="a t" style="left:239.7px;top:474.92px;font-size:7px;color:#666;letter-spacing:0.258px;">Invoice Appr...</div>
<div class="a" style="left:233px;top:489.78px;width:6px;height:6px;border-radius:50%;background:#d9b300"></div>
<div class="a t" style="left:239.7px;top:489.75px;font-size:7px;color:#666;letter-spacing:0.231px;">Invoice Proc...</div>
<svg class="a" style="left:261.5px;top:502.5px" width="5" height="3" viewBox="0 0 5 3"><path d="M0 0 H5 L2.5 3 Z" fill="#252423"/></svg>
<div class="a t" style="left:318.2px;top:384.92px;font-size:7.3px;color:#666;letter-spacing:-0.041px;">Date</div>
<div class="a t" style="left:414.3px;top:384.92px;font-size:7.3px;color:#666;letter-spacing:-0.272px;">Role</div>
<div class="a t" style="left:480.3px;top:384.92px;font-size:7.3px;color:#666;letter-spacing:0.037px;">Transactior</div>
<div class="a" style="left:518.5px;top:383.8px;width:3px;height:3px;border-radius:50%;background:#aaa"></div>
<svg class="a" style="left:318.5px;top:393px" width="5" height="3" viewBox="0 0 5 3"><path d="M0 3 H5 L2.5 0 Z" fill="#444"/></svg>
<div class="a" style="left:315.2px;top:397.6px;width:203px;height:0.9px;background:#cfcfcf"></div>
<div class="a t" style="left:318.2px;top:401.22px;font-size:7.3px;color:#252423;letter-spacing:-0.023px;">Tuesday, June 29, 2021</div>
<div class="a t" style="left:414.3px;top:401.22px;font-size:7.3px;color:#252423;letter-spacing:0.229px;">Invoice Approver</div>
<div class="a t" style="left:480.3px;top:401.22px;font-size:7.3px;color:#252423;width:37.5px;overflow:hidden;">Complete t</div>
<div class="a" style="left:315.2px;top:409.60px;width:203px;height:0.6px;background:#ececec"></div>
<div class="a t" style="left:318.2px;top:412.28px;font-size:7.3px;color:#252423;letter-spacing:-0.023px;">Tuesday, June 29, 2021</div>
<div class="a t" style="left:414.3px;top:412.28px;font-size:7.3px;color:#252423;letter-spacing:0.094px;">Invoice Processor</div>
<div class="a t" style="left:480.3px;top:412.28px;font-size:7.3px;color:#252423;width:37.5px;overflow:hidden;">Confirm Pa</div>
<div class="a" style="left:315.2px;top:420.66px;width:203px;height:0.6px;background:#ececec"></div>
<div class="a t" style="left:318.2px;top:423.34px;font-size:7.3px;color:#252423;letter-spacing:-0.023px;">Tuesday, June 29, 2021</div>
<div class="a t" style="left:414.3px;top:423.34px;font-size:7.3px;color:#252423;letter-spacing:0.094px;">Invoice Processor</div>
<div class="a t" style="left:480.3px;top:423.34px;font-size:7.3px;color:#252423;width:37.5px;overflow:hidden;">Invoice Ent</div>
<div class="a" style="left:315.2px;top:431.72px;width:203px;height:0.6px;background:#ececec"></div>
<div class="a t" style="left:318.2px;top:434.40px;font-size:7.3px;color:#252423;letter-spacing:-0.023px;">Tuesday, June 29, 2021</div>
<div class="a t" style="left:414.3px;top:434.40px;font-size:7.3px;color:#252423;letter-spacing:0.094px;">Invoice Processor</div>
<div class="a t" style="left:480.3px;top:434.40px;font-size:7.3px;color:#252423;width:37.5px;overflow:hidden;">Refund Wit</div>
<div class="a" style="left:315.2px;top:442.78px;width:203px;height:0.6px;background:#ececec"></div>
<div class="a t" style="left:318.2px;top:445.46px;font-size:7.3px;color:#252423;letter-spacing:0.062px;">Wednesday, June 30, 2021</div>
<div class="a t" style="left:414.3px;top:445.46px;font-size:7.3px;color:#252423;letter-spacing:0.229px;">Invoice Approver</div>
<div class="a t" style="left:480.3px;top:445.46px;font-size:7.3px;color:#252423;width:37.5px;overflow:hidden;">Approve In</div>
<div class="a" style="left:315.2px;top:453.84px;width:203px;height:0.6px;background:#ececec"></div>
<div class="a t" style="left:318.2px;top:456.52px;font-size:7.3px;color:#252423;letter-spacing:0.062px;">Wednesday, June 30, 2021</div>
<div class="a t" style="left:414.3px;top:456.52px;font-size:7.3px;color:#252423;letter-spacing:0.229px;">Invoice Approver</div>
<div class="a t" style="left:480.3px;top:456.52px;font-size:7.3px;color:#252423;width:37.5px;overflow:hidden;">Complete t</div>
<div class="a" style="left:315.2px;top:464.90px;width:203px;height:0.6px;background:#ececec"></div>
<div class="a t" style="left:318.2px;top:467.58px;font-size:7.3px;color:#252423;letter-spacing:0.062px;">Wednesday, June 30, 2021</div>
<div class="a t" style="left:414.3px;top:467.58px;font-size:7.3px;color:#252423;letter-spacing:0.094px;">Invoice Processor</div>
<div class="a t" style="left:480.3px;top:467.58px;font-size:7.3px;color:#252423;width:37.5px;overflow:hidden;">Confirm Pa</div>
<div class="a" style="left:315.2px;top:475.96px;width:203px;height:0.6px;background:#ececec"></div>
<div class="a t" style="left:318.2px;top:478.64px;font-size:7.3px;color:#252423;letter-spacing:0.062px;">Wednesday, June 30, 2021</div>
<div class="a t" style="left:414.3px;top:478.64px;font-size:7.3px;color:#252423;letter-spacing:0.094px;">Invoice Processor</div>
<div class="a t" style="left:480.3px;top:478.64px;font-size:7.3px;color:#252423;width:37.5px;overflow:hidden;">Confirm Pa</div>
<div class="a" style="left:315.2px;top:487.02px;width:203px;height:0.6px;background:#ececec"></div>
<div class="a t" style="left:318.2px;top:489.70px;font-size:7.3px;color:#252423;letter-spacing:0.062px;">Wednesday, June 30, 2021</div>
<div class="a t" style="left:414.3px;top:489.70px;font-size:7.3px;color:#252423;letter-spacing:0.094px;">Invoice Processor</div>
<div class="a t" style="left:480.3px;top:489.70px;font-size:7.3px;color:#252423;width:37.5px;overflow:hidden;">Credit Men</div>
<div class="a" style="left:315.2px;top:498.08px;width:203px;height:0.6px;background:#ececec"></div>
<div class="a" style="left:315px;top:500.5px;width:203px;height:4.2px;overflow:hidden"><div class="t" style="position:absolute;left:3.2px;top:1.2px;font-size:7.3px;color:#252423">Wednesday, June 30, 2021</div><div class="t" style="position:absolute;left:99.3px;top:1.2px;font-size:7.3px;color:#252423">Invoice Processor</div><div class="t" style="position:absolute;left:165.3px;top:1.2px;font-size:7.3px;color:#252423">Fill Credit M</div></div>
<div class="a" style="left:315.2px;top:503.9px;width:117.8px;height:3.6px;border-radius:1.8px;background:#a3a3a3"></div>
<div class="a t" style="left:542px;top:384.14px;font-size:8.1px;color:#252423;transform:scaleX(0.9751);transform-origin:0 0;-webkit-text-stroke:0.2px #252423;">Count of Location by Date, Transaction Type and Location</div>
<div class="a" style="left:542px;top:401.5px;width:6px;height:6px;border-radius:50%;background:#118dff"></div>
<div class="a t" style="left:549.5px;top:401.47px;font-size:7px;color:#666;letter-spacing:-0.230px;">San Diego, USA</div>
<div class="a" style="left:600.75px;top:401.5px;width:6px;height:6px;border-radius:50%;background:#12239e"></div>
<div class="a t" style="left:608.25px;top:401.47px;font-size:7px;color:#666;letter-spacing:-0.311px;">San Francisco, USA</div>
<div class="a" style="left:669px;top:401.5px;width:6px;height:6px;border-radius:50%;background:#e044a7"></div>
<div class="a t" style="left:676.5px;top:401.47px;font-size:7px;color:#666;letter-spacing:-0.234px;">Seattle, USA</div>
<div class="a t" style="right:533.5px;top:431.27px;font-size:7px;color:#777;">5</div>
<div class="a t" style="right:533.5px;top:458.27px;font-size:7px;color:#777;">0</div>
<svg class="a" style="left:0;top:0" width="1080" height="643"><line x1="552" y1="434.25" x2="748.75" y2="434.25" stroke="#c8c8c8" stroke-width="0.8" stroke-dasharray="1 3"/><line x1="555" y1="462" x2="555" y2="491" stroke="#d0d0d0" stroke-width="0.8" stroke-dasharray="1 2.5"/><line x1="603.25" y1="462" x2="603.25" y2="491" stroke="#d0d0d0" stroke-width="0.8" stroke-dasharray="1 2.5"/><line x1="698.75" y1="462" x2="698.75" y2="491" stroke="#d0d0d0" stroke-width="0.8" stroke-dasharray="1 2.5"/><line x1="747.5" y1="462" x2="747.5" y2="491" stroke="#d0d0d0" stroke-width="0.8" stroke-dasharray="1 2.5"/><rect x="557.00" y="455.85" width="9.25" height="5.40" fill="#e044a7"/><rect x="568.93" y="455.85" width="9.25" height="5.40" fill="#e044a7"/><rect x="580.86" y="455.85" width="9.25" height="5.40" fill="#e044a7"/><rect x="592.79" y="455.85" width="9.25" height="5.40" fill="#e044a7"/><rect x="604.72" y="450.45" width="9.25" height="10.80" fill="#e044a7"/><rect x="616.65" y="455.85" width="9.25" height="5.40" fill="#e044a7"/><rect x="628.58" y="455.85" width="9.25" height="5.40" fill="#118dff"/><rect x="628.58" y="450.45" width="9.25" height="5.40" fill="#e044a7"/><rect x="640.51" y="455.85" width="9.25" height="5.40" fill="#e044a7"/><rect x="652.44" y="455.85" width="9.25" height="5.40" fill="#e044a7"/><rect x="664.37" y="455.85" width="9.25" height="5.40" fill="#118dff"/><rect x="664.37" y="450.45" width="9.25" height="5.40" fill="#12239e"/><rect x="664.37" y="445.05" width="9.25" height="5.40" fill="#e044a7"/><rect x="676.30" y="455.85" width="9.25" height="5.40" fill="#e044a7"/><rect x="688.23" y="455.85" width="9.25" height="5.40" fill="#e044a7"/><rect x="700.16" y="455.85" width="9.25" height="5.40" fill="#12239e"/><rect x="712.09" y="455.85" width="9.25" height="5.40" fill="#118dff"/><rect x="724.02" y="455.85" width="9.25" height="5.40" fill="#118dff"/><rect x="724.02" y="450.45" width="9.25" height="5.40" fill="#12239e"/><rect x="724.02" y="445.05" width="9.25" height="5.40" fill="#e044a7"/><rect x="735.95" y="455.85" width="9.25" height="5.40" fill="#12239e"/><rect x="735.95" y="450.45" width="9.25" height="5.40" fill="#e044a7"/><rect x="552" y="504.3" width="198" height="4" rx="2" fill="#f0f0f0"/><rect x="552" y="504.3" width="15" height="4" rx="2" fill="#b3b3b3"/></svg>
<div class="a t" style="left:558.10px;top:465px;width:0;height:0"><div class="t" style="position:absolute;right:0;top:0;font-size:7px;color:#777;transform:rotate(-90deg);transform-origin:100% 0">Co...</div></div>
<div class="a t" style="left:570.03px;top:465px;width:0;height:0"><div class="t" style="position:absolute;right:0;top:0;font-size:7px;color:#777;transform:rotate(-90deg);transform-origin:100% 0">Co...</div></div>
<div class="a t" style="left:581.96px;top:465px;width:0;height:0"><div class="t" style="position:absolute;right:0;top:0;font-size:7px;color:#777;transform:rotate(-90deg);transform-origin:100% 0">Inv...</div></div>
<div class="a t" style="left:593.89px;top:465px;width:0;height:0"><div class="t" style="position:absolute;right:0;top:0;font-size:7px;color:#777;transform:rotate(-90deg);transform-origin:100% 0">Re...</div></div>
<div class="a t" style="left:605.82px;top:465px;width:0;height:0"><div class="t" style="position:absolute;right:0;top:0;font-size:7px;color:#777;transform:rotate(-90deg);transform-origin:100% 0">Ap...</div></div>
<div class="a t" style="left:617.75px;top:465px;width:0;height:0"><div class="t" style="position:absolute;right:0;top:0;font-size:7px;color:#777;transform:rotate(-90deg);transform-origin:100% 0">Co...</div></div>
<div class="a t" style="left:629.68px;top:465px;width:0;height:0"><div class="t" style="position:absolute;right:0;top:0;font-size:7px;color:#777;transform:rotate(-90deg);transform-origin:100% 0">Co...</div></div>
<div class="a t" style="left:641.61px;top:465px;width:0;height:0"><div class="t" style="position:absolute;right:0;top:0;font-size:7px;color:#777;transform:rotate(-90deg);transform-origin:100% 0">Cr...</div></div>
<div class="a t" style="left:653.54px;top:465px;width:0;height:0"><div class="t" style="position:absolute;right:0;top:0;font-size:7px;color:#777;transform:rotate(-90deg);transform-origin:100% 0">Fil...</div></div>
<div class="a t" style="left:665.47px;top:465px;width:0;height:0"><div class="t" style="position:absolute;right:0;top:0;font-size:7px;color:#777;transform:rotate(-90deg);transform-origin:100% 0">Inv...</div></div>
<div class="a t" style="left:677.40px;top:465px;width:0;height:0"><div class="t" style="position:absolute;right:0;top:0;font-size:7px;color:#777;transform:rotate(-90deg);transform-origin:100% 0">Re...</div></div>
<div class="a t" style="left:689.33px;top:465px;width:0;height:0"><div class="t" style="position:absolute;right:0;top:0;font-size:7px;color:#777;transform:rotate(-90deg);transform-origin:100% 0">Re...</div></div>
<div class="a t" style="left:701.26px;top:465px;width:0;height:0"><div class="t" style="position:absolute;right:0;top:0;font-size:7px;color:#777;transform:rotate(-90deg);transform-origin:100% 0">Ap...</div></div>
<div class="a t" style="left:713.19px;top:465px;width:0;height:0"><div class="t" style="position:absolute;right:0;top:0;font-size:7px;color:#777;transform:rotate(-90deg);transform-origin:100% 0">Ch...</div></div>
<div class="a t" style="left:725.12px;top:465px;width:0;height:0"><div class="t" style="position:absolute;right:0;top:0;font-size:7px;color:#777;transform:rotate(-90deg);transform-origin:100% 0">Co...</div></div>
<div class="a t" style="left:737.05px;top:465px;width:0;height:0"><div class="t" style="position:absolute;right:0;top:0;font-size:7px;color:#777;transform:rotate(-90deg);transform-origin:100% 0">Co...</div></div>
<div class="a t" style="left:579.6px;top:483.17px;font-size:7px;color:#777;letter-spacing:-0.278px;transform:translateX(-50%);">Tuesday, Jun...</div>
<div class="a t" style="left:651.25px;top:483.17px;font-size:7px;color:#777;letter-spacing:-0.135px;transform:translateX(-50%);">Wednesday, June 30, 2021</div>
<div class="a t" style="left:722.9px;top:483.17px;font-size:7px;color:#777;letter-spacing:-0.210px;transform:translateX(-50%);">Thursday, Jul...</div>
<div class="a t" style="left:651.25px;top:496.04px;font-size:8.1px;color:#252423;transform:translateX(-50%) scaleX(0.8517);transform-origin:50% 0;-webkit-text-stroke:0.2px #252423;">Transaction Type</div>
<svg class="a" style="left:801.5px;top:66.5px" width="5" height="5.4" viewBox="0 0 5 5.4"><path d="M2.8 0.4 L0.5 2.7 L2.8 5 M4.6 0.4 L2.3 2.7 L4.6 5" stroke="#424242" stroke-width="0.9" fill="none"/></svg>
<svg class="a" style="left:802.6px;top:85px" width="5.5" height="6.4" viewBox="0 0 5.5 6.4"><path d="M0.5 1.8 V4.5 M2.8 0.5 V5 M4.8 0 V6.3" stroke="#424242" stroke-width="0.9"/></svg>
<div class="a t" style="left:799.6px;top:98.3px;font-size:9.3px;font-weight:700;color:#3a3a3a;writing-mode:vertical-rl;letter-spacing:-0.15px">Filters</div>
<svg class="a" style="left:826.1px;top:70.7px" width="15.4" height="14.3" viewBox="0 0 15.4 14.3"><defs><linearGradient id="cg1" x1="0" y1="0" x2="0" y2="1"><stop offset="0" stop-color="#3aa14a"/><stop offset="1" stop-color="#8cc43e"/></linearGradient><linearGradient id="cg2" x1="0" y1="0" x2="0" y2="1"><stop offset="0" stop-color="#2cc6a2"/><stop offset="1" stop-color="#62bb58"/></linearGradient></defs><path d="M3.8 0.6 H10 L7.2 10.2 H1 Z" fill="url(#cg1)" stroke="url(#cg1)" stroke-width="1.2" stroke-linejoin="round"/><path d="M8.2 4.1 H14.4 L11.6 13.7 H5.4 Z" fill="url(#cg2)" stroke="url(#cg2)" stroke-width="1.2" stroke-linejoin="round"/><path d="M7.6 0.1 H10.6 L9.5 4 H8 Z" fill="#16803c"/><path d="M5.2 14 H8.2 L8.8 10.5 H6.2 Z" fill="#147a3a"/><path d="M9.6 4.3 L7.5 10.3" stroke="#fff" stroke-width="1.1"/></svg>
<div class="a t" style="left:847.8px;top:74.23px;font-size:10px;color:#242424;transform:scaleX(1.1047);transform-origin:0 0;-webkit-text-stroke:0.4px #242424;">Copilot</div>
<div class="a" style="left:888.3px;top:71.7px;width:33.7px;height:12.7px;border-radius:6.4px;background:#e8e8e8"></div>
<div class="a t" style="left:893.9px;top:76.08px;font-size:6.4px;color:#505050;transform:scaleX(1.0029);transform-origin:0 0;-webkit-text-stroke:0.15px #505050;">Preview</div>
<svg class="a" style="left:1033px;top:74.9px" width="6" height="6" viewBox="0 0 6 6"><path d="M0.4 0.4 L5.6 5.6 M5.6 0.4 L0.4 5.6" stroke="#424242" stroke-width="0.9"/></svg>
<div class="a" style="left:815px;top:98.9px;width:235px;height:413.4px;overflow:hidden">
<div class="a" style="left:17.899999999999977px;top:-20px;width:201.4px;height:128.10px;background:#fff;border-radius:6px;box-shadow:0 1px 2px rgba(0,0,0,.12)"></div>
<div class="a t" style="left:30px;top:0.98px;font-size:9px;color:#242424;letter-spacing:0.051px;">I can chat, answer data questions, and</div>
<div class="a t" style="left:30px;top:14.98px;font-size:9px;color:#242424;letter-spacing:0.116px;">summarize report content. Here are some</div>
<div class="a t" style="left:30px;top:28.78px;font-size:9px;color:#242424;letter-spacing:0.147px;">things you can try:</div>
<div class="a" style="left:30.200000000000045px;top:45.50px;width:176.6px;height:23.40px;border:0.8px solid #d4d4d4;border-radius:2.5px;background:#fff"></div>
<svg class="a" style="left:41px;top:52.70px" width="11" height="8.5" viewBox="0 0 11 8.5"><path d="M0.3 0.6 H9.5 M0.3 4.3 H10.8 M0.3 8 H7.5" stroke="#616161" stroke-width="0.8"/></svg>
<div class="a t" style="left:58.9px;top:54.08px;font-size:9px;color:#242424;letter-spacing:0.122px;">Create a bulleted list of insights</div>
<div class="a" style="left:30.200000000000045px;top:74.90px;width:176.6px;height:23.60px;border:0.8px solid #d4d4d4;border-radius:2.5px;background:#fff"></div>
<svg class="a" style="left:41px;top:82.10px" width="11" height="8.5" viewBox="0 0 11 8.5"><path d="M0.3 0.6 H9.5 M0.3 4.3 H10.8 M0.3 8 H7.5" stroke="#616161" stroke-width="0.8"/></svg>
<div class="a t" style="left:58.9px;top:83.48px;font-size:9px;color:#242424;letter-spacing:0.070px;">Summarize visuals on this page</div>
<div class="a" style="left:69.20000000000005px;top:116.60px;width:150.1px;height:22.2px;border-radius:5px;background:#e1f3ea"></div>
<div class="a t" style="left:79.6px;top:124.38px;font-size:9px;color:#242424;letter-spacing:0.081px;">Summarize visuals on this page</div>
<div class="a" style="left:17.700000000000045px;top:149.10px;width:201.4px;height:282.00px;background:#fff;border-radius:6px;box-shadow:0 1px 2px rgba(0,0,0,.12)"></div>
<div class="a t" style="left:28.5px;top:164.58px;font-size:9px;color:#242424;letter-spacing:0.083px;">From the visual "Count of CaseId by Date</div>
<div class="a t" style="left:28.5px;top:178.64px;font-size:9px;color:#242424;letter-spacing:0.135px;">and Role", it is clear that the number of</div>
<div class="a t" style="left:28.5px;top:192.70px;font-size:9px;color:#242424;letter-spacing:0.033px;">cases handled by the Invoice Processor</div>
<div class="a t" style="left:28.5px;top:206.76px;font-size:9px;color:#242424;letter-spacing:0.146px;">significantly exceeded that of the Invoice</div>
<div class="a t" style="left:28.5px;top:220.82px;font-size:9px;color:#242424;letter-spacing:0.136px;">Approver from June 29 to August 4, 2021.</div>
<div class="a t" style="left:28.5px;top:234.88px;font-size:9px;color:#242424;letter-spacing:0.119px;">The highest number of cases handled by</div>
<div class="a t" style="left:28.5px;top:248.94px;font-size:9px;color:#242424;letter-spacing:0.046px;">the Invoice Processor in a single day was 30</div>
<div class="a t" style="left:28.5px;top:263.00px;font-size:9px;color:#242424;letter-spacing:0.162px;">on July 28, while for the Invoice Approver it</div>
<div class="a t" style="left:28.5px;top:277.06px;font-size:9px;color:#242424;letter-spacing:-0.003px;">was 9 on July 7</div>
<div class="a" style="left:93.5px;top:274.10px;width:12.2px;height:14.8px;border:0.8px solid #d6d6d6;border-radius:2.5px;background:#fff"></div>
<div class="a t" style="left:97.6px;top:279.57px;font-size:6.3px;color:#424242;">1</div>
<div class="a t" style="left:106.6px;top:276.98px;font-size:9px;color:#242424;">.</div>
<div class="a t" style="left:28.5px;top:301.78px;font-size:9px;color:#242424;letter-spacing:0.095px;">The visual "Count of Location by Date,</div>
<div class="a t" style="left:28.5px;top:315.84px;font-size:9px;color:#242424;letter-spacing:0.042px;">Transaction Type and Location" gives us</div>
<div class="a t" style="left:28.5px;top:329.90px;font-size:9px;color:#242424;letter-spacing:0.238px;">insights into the volume of different</div>
<div class="a t" style="left:28.5px;top:343.96px;font-size:9px;color:#242424;letter-spacing:0.097px;">transaction types handled across three</div>
<div class="a t" style="left:28.5px;top:358.02px;font-size:9px;color:#242424;letter-spacing:-0.008px;">locations: San Diego, San Francisco and</div>
<div class="a t" style="left:28.5px;top:372.08px;font-size:9px;color:#242424;letter-spacing:0.043px;">Seattle. Transaction types include</div>
<div class="a t" style="left:28.5px;top:386.14px;font-size:9px;color:#242424;letter-spacing:0.183px;">"Complete the Customer Memo", "Confirm</div>
<div class="a t" style="left:28.5px;top:400.20px;font-size:9px;color:#242424;letter-spacing:0.025px;">Payment Received", "Invoice Entry",</div>
</div>
<div class="a" style="left:1045.2px;top:114.8px;width:4.8px;height:283px;background:#c4c4c4;border-radius:1px"></div>
<div class="a" style="left:826.4px;top:521.4px;width:212.9px;height:67.1px;border:0.8px solid #dadada;border-radius:5px;background:#fff"></div>
<svg class="a" style="left:840.4px;top:564.4px" width="10" height="10" viewBox="0 0 10 10"><path d="M3.5 0.9 L6 3.5 L3.5 6.1 L0.9 3.5 Z" stroke="#4a4a4a" stroke-width="1.2" fill="none" stroke-linejoin="round"/><path d="M7.6 5.9 L9.4 7.6 L7.6 9.4 L5.9 7.6 Z" fill="#5a5a5a" stroke="#5a5a5a" stroke-width="0.6" stroke-linejoin="round"/></svg>
<svg class="a" style="left:1015.5px;top:565px" width="9.5" height="8.6" viewBox="0 0 9.5 8.6"><path d="M0.5 0.5 L9 4.3 L0.5 8.1 L1.8 4.3 Z M1.8 4.3 H5.5" stroke="#424242" stroke-width="0.8" fill="none" stroke-linejoin="round"/></svg>
<div class="a t" style="left:826.4px;top:598.65px;font-size:6.2px;color:#616161;letter-spacing:0.213px;">Content created by AI may not be accurate or appropriate, so review it</div>
<div class="a t" style="left:826.4px;top:607.75px;font-size:6.2px;color:#616161;letter-spacing:-0.035px;">carefully.</div>
<div class="a t" style="left:853.4px;top:607.75px;font-size:6.2px;color:#0f7b6c;letter-spacing:0.068px;text-decoration:underline;">Read terms</div>
<div class="a" style="left:910px;top:630.6px;width:3px;height:0.8px;background:#616161"></div>
<div class="a" style="left:915.2px;top:630.7px;width:66.6px;height:0.7px;background:#616161"></div>
<div class="a" style="left:942px;top:627.4px;width:2.6px;height:7.3px;background:#555"></div>
<div class="a" style="left:948.2px;top:629.2px;width:0.6px;height:3.6px;background:#616161"></div>
<svg class="a" style="left:985.7px;top:628.7px" width="4.7" height="4.7" viewBox="0 0 4.7 4.7"><path d="M2.35 0 V4.7 M0 2.35 H4.7" stroke="#616161" stroke-width="0.8"/></svg>
<div class="a t" style="left:999.9px;top:628.35px;font-size:7.5px;color:#616161;letter-spacing:-0.058px;">87%</div>
<svg class="a" style="left:1028.3px;top:627.9px" width="9.3" height="6.8" viewBox="0 0 9.3 6.8"><rect x=".4" y=".4" width="8.5" height="6" rx=".6" stroke="#616161" stroke-width="0.8" fill="none"/><path d="M1.8 2.6 V1.7 H2.9 M7.5 2.6 V1.7 H6.4 M1.8 4.2 V5.1 H2.9 M7.5 4.2 V5.1 H6.4" stroke="#616161" stroke-width="0.6" fill="none"/></svg>
<div class="a" style="left:1050px;top:0;width:1px;height:29px;background:#000"></div>
<svg class="a" style="left:1059px;top:6px" width="11.5" height="11.5" viewBox="0 0 11.5 11.5"><circle cx="4.6" cy="4.9" r="3.6" fill="#d8ecfa" stroke="#505050" stroke-width="1.2"/><path d="M7.3 7.6 L10.3 10.3" stroke="#c53ad6" stroke-width="1.8" stroke-linecap="round"/></svg>
<svg class="a" style="left:1060px;top:33.7px" width="11.2" height="11" viewBox="0 0 11.2 11"><defs><linearGradient id="tg" x1="0" y1="1" x2="1" y2="0"><stop offset="0" stop-color="#2f4fe8"/><stop offset="1" stop-color="#6f8cff"/></linearGradient></defs><path d="M0.6 6.4 L6 0.6 H10.6 V5.1 L5.3 10.5 a1 1 0 0 1 -1.4 0 L0.6 7.8 a1 1 0 0 1 0 -1.4 Z" fill="url(#tg)"/><circle cx="8.5" cy="2.7" r="1.1" fill="#f5c842"/></svg>
<svg class="a" style="left:1059.3px;top:60.6px" width="12" height="10.3" viewBox="0 0 12 10.3"><path d="M4 2.5 V1 H8 V2.5" stroke="#7a7a7a" stroke-width="0.9" fill="none"/><rect x="0" y="2.5" width="12" height="7.8" rx="1" fill="#d9501e"/><rect x="0" y="2.5" width="12" height="2.8" rx="1" fill="#e8652e"/><rect x="5.2" y="4.8" width="1.6" height="1.6" fill="#f0d0c0"/></svg>
<svg class="a" style="left:1059px;top:86.8px" width="12.2" height="12" viewBox="0 0 12.2 12"><path d="M6.6 0 H7.7 V1.2 H8.6 V0 H9.9 V1.2 H10.8 V0 H12 V2.6 L11.1 3.5 V6.6 H12.2 V8.2 H6.4 V6.6 H7.5 V3.5 L6.6 2.6 Z" fill="#b53df2"/><circle cx="3.8" cy="3.9" r="2.1" fill="#4a4a4a"/><path d="M2 5.8 H5.6 L6 8.6 H7.4 V12 H0 V8.6 H1.5 Z" fill="#404040"/></svg>
<svg class="a" style="left:1060px;top:113.5px" width="10.5" height="11.2" viewBox="0 0 10.5 11.2"><defs><linearGradient id="mg" x1="0" y1="0" x2="1" y2="1"><stop offset="0" stop-color="#3f6ee8"/><stop offset=".5" stop-color="#8a52d8"/><stop offset="1" stop-color="#2fc3e8"/></linearGradient></defs><path d="M5.25 0.3 L10.2 3 V8.2 L5.25 10.9 L0.3 8.2 V3 Z" fill="url(#mg)"/><circle cx="5.25" cy="5.6" r="2" fill="#f7f7f7"/></svg>
<svg class="a" style="left:1060px;top:140.6px" width="11.2" height="10.8" viewBox="0 0 11.2 10.8"><rect x="3.5" y="0" width="7.7" height="10.8" rx="0.8" fill="#1a8ad6"/><rect x="3.5" y="5" width="7.7" height="5.8" rx="0.8" fill="#0f5fa8"/><rect x="0" y="1.8" width="6.8" height="7" rx="0.8" fill="#0a64c0"/><circle cx="3.4" cy="5.3" r="1.9" stroke="#fff" stroke-width="1" fill="none"/></svg>
<svg class="a" style="left:1060px;top:166.7px" width="11" height="12.5" viewBox="0 0 11 12.5"><defs><linearGradient id="dg" x1="0" y1="0" x2="1" y2="1"><stop offset="0" stop-color="#8c3cf0"/><stop offset="1" stop-color="#e048c8"/></linearGradient></defs><path d="M5 0.5 L2.5 7" stroke="#9a50e8" stroke-width="1.4" stroke-linecap="round"/><path d="M1 9 C1 6.5 3 6.2 4 7.5 C5.5 9.5 8.5 8.5 9 5 L10.5 5.5 C10.5 10 7 12.5 4 12 C2 11.7 1 10.5 1 9 Z" fill="url(#dg)"/><circle cx="9.3" cy="2.5" r="1.5" fill="#a050f0"/></svg>
<svg class="a" style="left:1059.5px;top:195.4px" width="11.5" height="8.1" viewBox="0 0 11.5 8.1"><path d="M0 1.2 L11.5 0 L7.5 8.1 L5.2 5 Z" fill="#1c8adb"/><path d="M2 2.8 L11 0.3 L4.8 4.2 L4.4 6.8 Z" fill="#f0b020"/><path d="M4.4 4.3 L11.5 0 L6.8 8 Z" fill="#1a7fe0"/></svg>
<svg class="a" style="left:1059.7px;top:220.7px" width="11" height="11" viewBox="0 0 11 11"><circle cx="5.5" cy="5.5" r="5.5" fill="#1ed760"/><path d="M2.6 3.8 C4.5 3.2 6.8 3.4 8.6 4.3 M2.9 5.5 C4.5 5.1 6.4 5.3 7.9 6 M3.2 7.1 C4.5 6.8 5.9 7 7.1 7.5" stroke="#fff" stroke-width="0.8" fill="none" stroke-linecap="round"/></svg>
<svg class="a" style="left:1059.7px;top:247.5px" width="11" height="11.5" viewBox="0 0 11 11.5"><defs><linearGradient id="msg" x1="0" y1="1" x2="1" y2="0"><stop offset="0" stop-color="#1a8cff"/><stop offset=".5" stop-color="#a040f0"/><stop offset="1" stop-color="#ff5a80"/></linearGradient></defs><path d="M5.5 0 C8.6 0 11 2.3 11 5.3 C11 8.3 8.6 10.6 5.5 10.6 C5 10.6 4.4 10.5 3.9 10.4 L2 11.4 V9.6 C0.8 8.6 0 7.1 0 5.3 C0 2.3 2.4 0 5.5 0 Z" fill="url(#msg)"/><path d="M2.5 6.8 L4.5 4.3 L6 5.6 L8.5 3.8 L6.5 6.4 L5 5.1 Z" fill="#fff"/></svg>
<svg class="a" style="left:1060px;top:274.7px" width="11.2" height="10.5" viewBox="0 0 12 11"><circle cx="7.3" cy="1.6" r="1.6" fill="#7b83eb"/><circle cx="10.5" cy="2.4" r="1.3" fill="#5059c9"/><path d="M8.5 4.2 H12 V7.8 a2 2 0 0 1 -3.5 1.3 Z" fill="#5059c9"/><path d="M3.8 4 H10.2 V8.4 a2.4 2.4 0 0 1 -4.8 0 Z" fill="#7b83eb"/><rect x="0" y="2.6" width="7" height="7" rx=".7" fill="#4b53bc"/><path d="M1.6 4.4 H5.4 M3.5 4.4 V8.2" stroke="#fff" stroke-width="1.1"/></svg>
<div class="a" style="left:1056px;top:301px;width:18.7px;height:0.9px;background:#d0d0d0"></div>
<svg class="a" style="left:1060.9px;top:319.3px" width="8" height="8" viewBox="0 0 8 8"><path d="M4 0 V8 M0 4 H8" stroke="#616161" stroke-width="0.9"/></svg>
<div class="a" style="left:1056px;top:585px;width:18.7px;height:0.9px;background:#d0d0d0"></div>
<svg class="a" style="left:1060.3px;top:595.8px" width="10" height="8.5" viewBox="0 0 10 8.5"><rect x=".45" y=".45" width="9.1" height="7.6" rx="1.2" stroke="#424242" stroke-width="0.9" fill="none"/><path d="M6.3 .45 V8.05" stroke="#424242" stroke-width="0.9"/></svg>
<svg class="a" style="left:1059.4px;top:621.5px" width="11.6" height="11.6" viewBox="0 0 24 24"><path d="M12 8.5a3.5 3.5 0 1 0 0 7a3.5 3.5 0 1 0 0-7z" stroke="#424242" stroke-width="2.3" fill="none"/><path d="M10.3 2.5h3.4l.6 2.6 1.9 1.1 2.5-.9 1.7 2.9-2 1.8v2.2l2 1.8-1.7 2.9-2.5-.9-1.9 1.1-.6 2.6h-3.4l-.6-2.6-1.9-1.1-2.5.9-1.7-2.9 2-1.8v-2.2l-2-1.8 1.7-2.9 2.5.9 1.9-1.1z" stroke="#424242" stroke-width="2.3" fill="none" stroke-linejoin="round"/></svg>
<svg class="a" style="left:756px;top:581.6px;z-index:60" width="42" height="33" viewBox="0 0 42 33"><ellipse cx="15" cy="12" rx="14.5" ry="12" fill="rgba(160,160,160,.85)"/><path d="M6 21 L5 27 L12 23 Z" fill="rgba(160,160,160,.85)"/><circle cx="10" cy="8.3" r="1.8" fill="#fff"/><circle cx="20" cy="8.3" r="1.8" fill="#fff"/><ellipse cx="29" cy="21" rx="12.5" ry="10.5" fill="#fff"/><ellipse cx="29" cy="21" rx="11.5" ry="9.8" fill="rgba(160,160,160,.85)"/><path d="M35 29 L38 33 L31 30.5 Z" fill="rgba(160,160,160,.85)"/><circle cx="24.5" cy="18.5" r="1.6" fill="#fff"/><circle cx="33.5" cy="18.5" r="1.6" fill="#fff"/></svg>
<svg class="a" style="left:806px;top:584.5px;z-index:60" width="93" height="30" viewBox="0 0 93 30"><path d="M10 1 L2 12 M17 1 L27 12 M13 13 L5 27 L24 25 M19 19 L25 27" stroke="rgba(150,150,150,.78)" stroke-width="2.5" fill="none" stroke-linecap="butt" stroke-linejoin="miter"/><path d="M46 1 C45 6 41 11 35 14 M46 4 C48 8 52 12 58 14 M40 16 C39 21 37 25 34 28 M40 20 L45 27 M52 16 C51 21 49 25 47 28 M52 19 L58 28" stroke="rgba(150,150,150,.78)" stroke-width="2.5" fill="none" stroke-linecap="butt" stroke-linejoin="miter"/><path d="M67 2 H87 V10 H67 Z M63 14 H92 M70 14 L68 20 H88 C88 25 86 28 80 28" stroke="rgba(150,150,150,.78)" stroke-width="2.5" fill="none" stroke-linecap="butt" stroke-linejoin="miter"/></svg>
<div class="a" style="left:909.8px;top:597.3px;width:4.6px;height:4.6px;border-radius:50%;background:rgba(150,150,150,.78);z-index:60"></div>
<div class="a t" style="left:929px;top:584.56px;font-size:31px;color:rgba(150,150,150,.78);letter-spacing:0.163px;z-index:60;">VisActor</div>
</body></html>
